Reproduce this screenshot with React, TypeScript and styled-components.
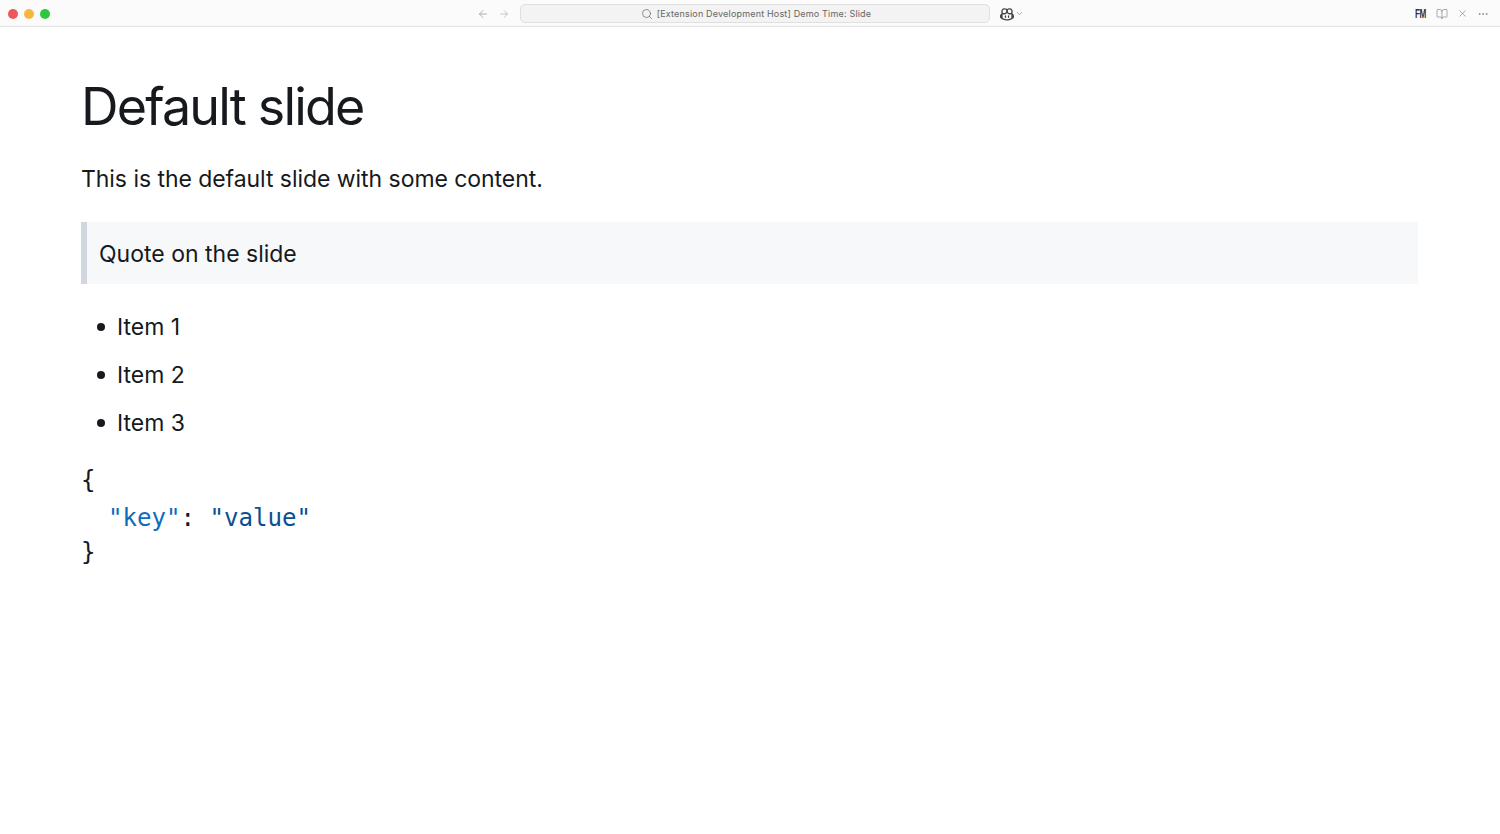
import styled, { createGlobalStyle } from "styled-components"
import { ArrowLeft, ArrowRight, Search, ChevronDown, X, Ellipsis, BookOpen } from "lucide-react"
import { VscCopilot } from "react-icons/vsc"

const GlobalStyle = createGlobalStyle`
html, body {
    margin: 0;
    padding: 0;
    background: #ffffff;
}
body {
    font-family: "Inter", "Liberation Sans", sans-serif;
    color: #16191d;
}
`

const TitleBar = styled.header`
display: grid;
grid-template-columns: 520px 470px 1fr;
align-items: center;
box-sizing: border-box;
height: 27px;
padding-top: 1px;
background: #fbfbfb;
border-bottom: 1px solid #e2e2e2;
`

const LeftArea = styled.div`
display: flex;
justify-content: space-between;
align-items: center;
`

const TrafficLights = styled.div`
display: flex;
gap: 6px;
padding-left: 8px;
`

const Light = styled.span<{ $color: string }>`
width: 10px;
height: 10px;
border-radius: 50%;
background: ${props => props.$color};
`

const NavButtons = styled.div`
display: flex;
align-items: center;
gap: 9px;
padding-right: 10px;
color: #8a8a8a;
`

const CommandCenter = styled.div`
display: flex;
justify-content: center;
align-items: center;
gap: 4px;
height: 17px;
padding-left: 2px;
background: #f3f3f3;
border: 1px solid #dfdfdf;
border-radius: 5px;
font-size: 9px;
letter-spacing: 0.18px;
color: #666666;
`

const RightArea = styled.div`
display: flex;
justify-content: space-between;
align-items: center;
padding: 0 11px 0 10px;
`

const CopilotButton = styled.div`
display: flex;
align-items: center;
gap: 1px;
color: #444444;
`

const Actions = styled.div`
display: flex;
align-items: center;
gap: 9px;
color: #777777;
`

const FmBadge = styled.span`
font-family: "Liberation Sans", sans-serif;
font-size: 12px;
font-weight: 700;
letter-spacing: -0.6px;
color: #333333;
width: 12px;
transform: scaleX(0.68);
transform-origin: left center;
`

const Slide = styled.main`
padding: 47px 82px 0 81px;
`

const Titulo = styled.h1`
margin: 0;
font-size: 52px;
font-weight: 400;
line-height: 66px;
letter-spacing: -1.8px;
`

const Paragrafo = styled.p`
margin: 21px 0 0;
font-size: 23px;
line-height: 36px;
letter-spacing: -0.05px;
`

const Citacao = styled.blockquote`
margin: 25px 0 0;
padding: 14px 12px 12px;
background: #f6f8fa;
border-left: 6px solid #d0d7de;
font-size: 23px;
line-height: 36px;
`

const Lista = styled.ul`
list-style: none;
margin: 25px 0 0;
padding: 0 0 0 16px;
font-size: 23px;
line-height: 36px;
`

const ItemLista = styled.li`
display: flex;
align-items: center;
gap: 12px;
margin-bottom: 12px;
&::before {
    content: '';
    width: 8px;
    height: 8px;
    border-radius: 50%;
    background: #16191d;
}
&:last-child {
    margin-bottom: 0;
}
`

const Codigo = styled.pre`
margin: 21px 0 0;
font-family: "DejaVu Sans Mono", "Liberation Mono", monospace;
font-size: 24.1px;
line-height: 36px;
`

const LinhaCodigo = styled.div<{ $indentada?: boolean }>`
height: 36px;
padding-left: ${props => props.$indentada ? '27px' : '0'};
line-height: ${props => props.$indentada ? '40px' : '36px'};
`

const Chave = styled.span`
color: #0a6ebd;
`

const Valor = styled.span`
color: #0a4f8f;
`

export default function App() {
    return (
        <>
            <GlobalStyle />
            <TitleBar>
                <LeftArea>
                    <TrafficLights>
                        <Light $color="#f0575a" />
                        <Light $color="#f8b73c" />
                        <Light $color="#2cc840" />
                    </TrafficLights>
                    <NavButtons>
                        <ArrowLeft size={12} strokeWidth={1.3} />
                        <ArrowRight size={12} strokeWidth={1.3} color="#adadad" />
                    </NavButtons>
                </LeftArea>
                <CommandCenter>
                    <Search size={12} strokeWidth={1.4} />
                    <span>[Extension Development Host] Demo Time: Slide</span>
                </CommandCenter>
                <RightArea>
                    <CopilotButton>
                        <VscCopilot size={14} />
                        <ChevronDown size={9} color="#8a8a8a" />
                    </CopilotButton>
                    <Actions>
                        <FmBadge>FM</FmBadge>
                        <BookOpen size={12} strokeWidth={1.2} />
                        <X size={11} strokeWidth={1.3} />
                        <Ellipsis size={12} strokeWidth={1.4} />
                    </Actions>
                </RightArea>
            </TitleBar>
            <Slide>
                <Titulo>Default slide</Titulo>
                <Paragrafo>This is the default slide with some content.</Paragrafo>
                <Citacao>Quote on the slide</Citacao>
                <Lista>
                    <ItemLista>Item 1</ItemLista>
                    <ItemLista>Item 2</ItemLista>
                    <ItemLista>Item 3</ItemLista>
                </Lista>
                <Codigo>
                    <LinhaCodigo>{"{"}</LinhaCodigo>
                    <LinhaCodigo $indentada>
                        <Chave>"key"</Chave>
                        {": "}
                        <Valor>"value"</Valor>
                    </LinhaCodigo>
                    <LinhaCodigo>{"}"}</LinhaCodigo>
                </Codigo>
            </Slide>
        </>
    )
}
